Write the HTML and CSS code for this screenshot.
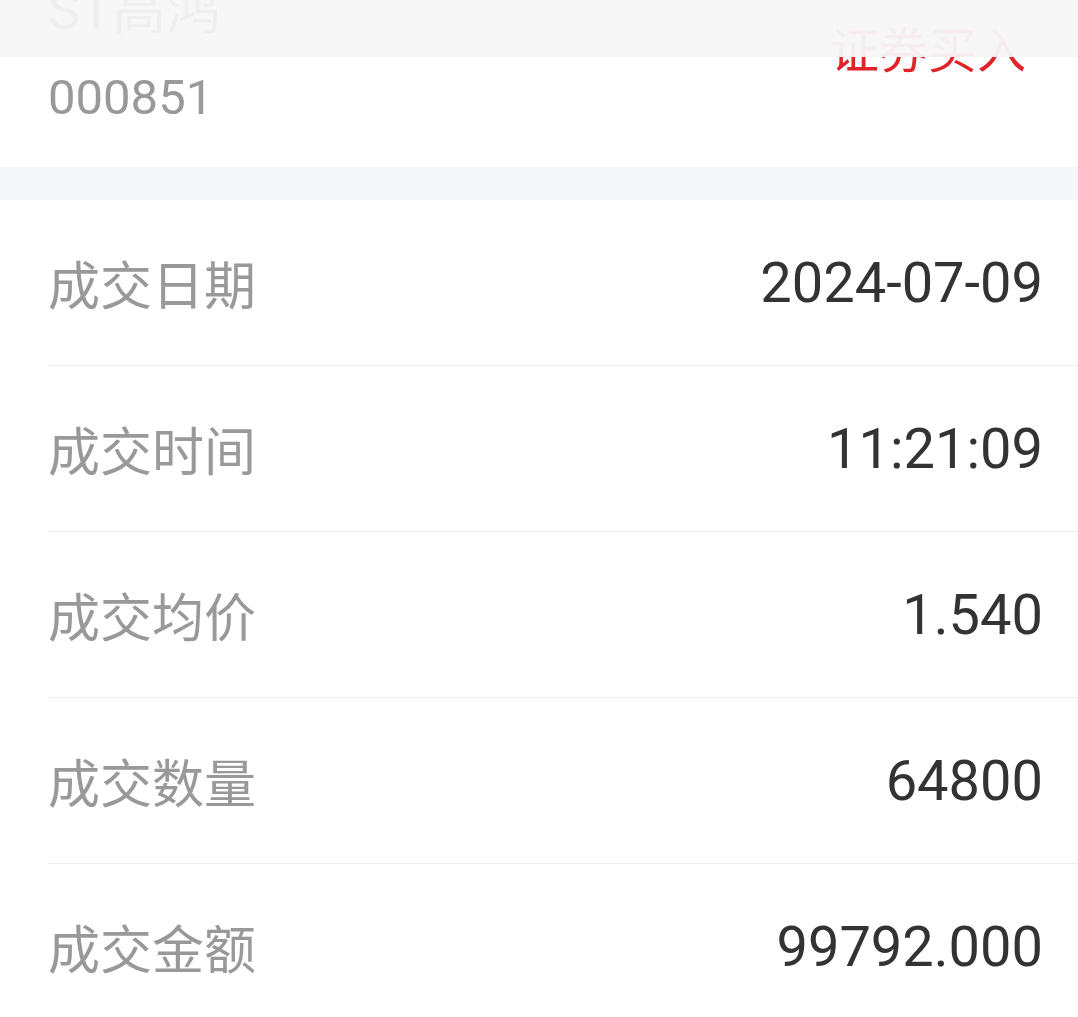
FILE: index.html
```html
<!DOCTYPE html>
<html lang="zh-CN">
<head>
<meta charset="utf-8">
<title>成交详情</title>
<link rel="stylesheet" href="styles.css">
</head>
<body>
<div class="topbar"></div>
<main class="page">
  <section class="stock">
    <div class="stock-info">
      <div class="stock-name">ST高鸿</div>
      <div class="stock-code">000851</div>
    </div>
    <div class="trade-type">证券买入</div>
  </section>
  <div class="gap"></div>
  <section class="details">
    <div class="row"><span class="label">成交日期</span><span class="value">2024-07-09</span></div>
    <div class="row"><span class="label">成交时间</span><span class="value">11:21:09</span></div>
    <div class="row"><span class="label">成交均价</span><span class="value">1.540</span></div>
    <div class="row"><span class="label">成交数量</span><span class="value">64800</span></div>
    <div class="row"><span class="label">成交金额</span><span class="value">99792.000</span></div>
  </section>
</main>
</body>
</html>
```
FILE: styles.css
```css
html, body {
  margin: 0;
  padding: 0;
  background: #ffffff;
  font-family: Roboto, "Noto Sans CJK SC", sans-serif;
  overflow: hidden;
}

.topbar {
  position: fixed;
  top: 0;
  left: 0;
  right: 0;
  height: 57px;
  background: rgba(247, 247, 247, 0.96);
  z-index: 10;
}

.page {
  display: flex;
  flex-direction: column;
}

.stock {
  height: 167px;
  display: flex;
  justify-content: space-between;
  align-items: flex-start;
  padding: 0 52px 0 48px;
  box-sizing: border-box;
}

.stock-info {
  display: flex;
  flex-direction: column;
}

.stock-name {
  font-size: 54px;
  line-height: 54px;
  color: #1f3358;
  margin-top: -16px;
}

.stock-code {
  font-size: 49px;
  line-height: 49px;
  color: #999999;
  margin-top: 35px;
}

.trade-type {
  font-family: "Noto Sans CJK SC", sans-serif;
  font-size: 49px;
  line-height: 49px;
  color: #e0242a;
  margin-top: 22px;
}

.gap {
  height: 33px;
  background: #f6f7f9;
}

.details {
  display: flex;
  flex-direction: column;
}

.row {
  height: 166px;
  margin-left: 48px;
  padding-right: 35px;
  border-bottom: 1px solid #eeeeee;
  box-sizing: border-box;
  display: flex;
  justify-content: space-between;
  align-items: center;
}

.label {
  font-family: "Noto Sans CJK SC", sans-serif;
  font-size: 52px;
  color: #999999;
}

.value {
  font-size: 56px;
  color: #333333;
}
```
